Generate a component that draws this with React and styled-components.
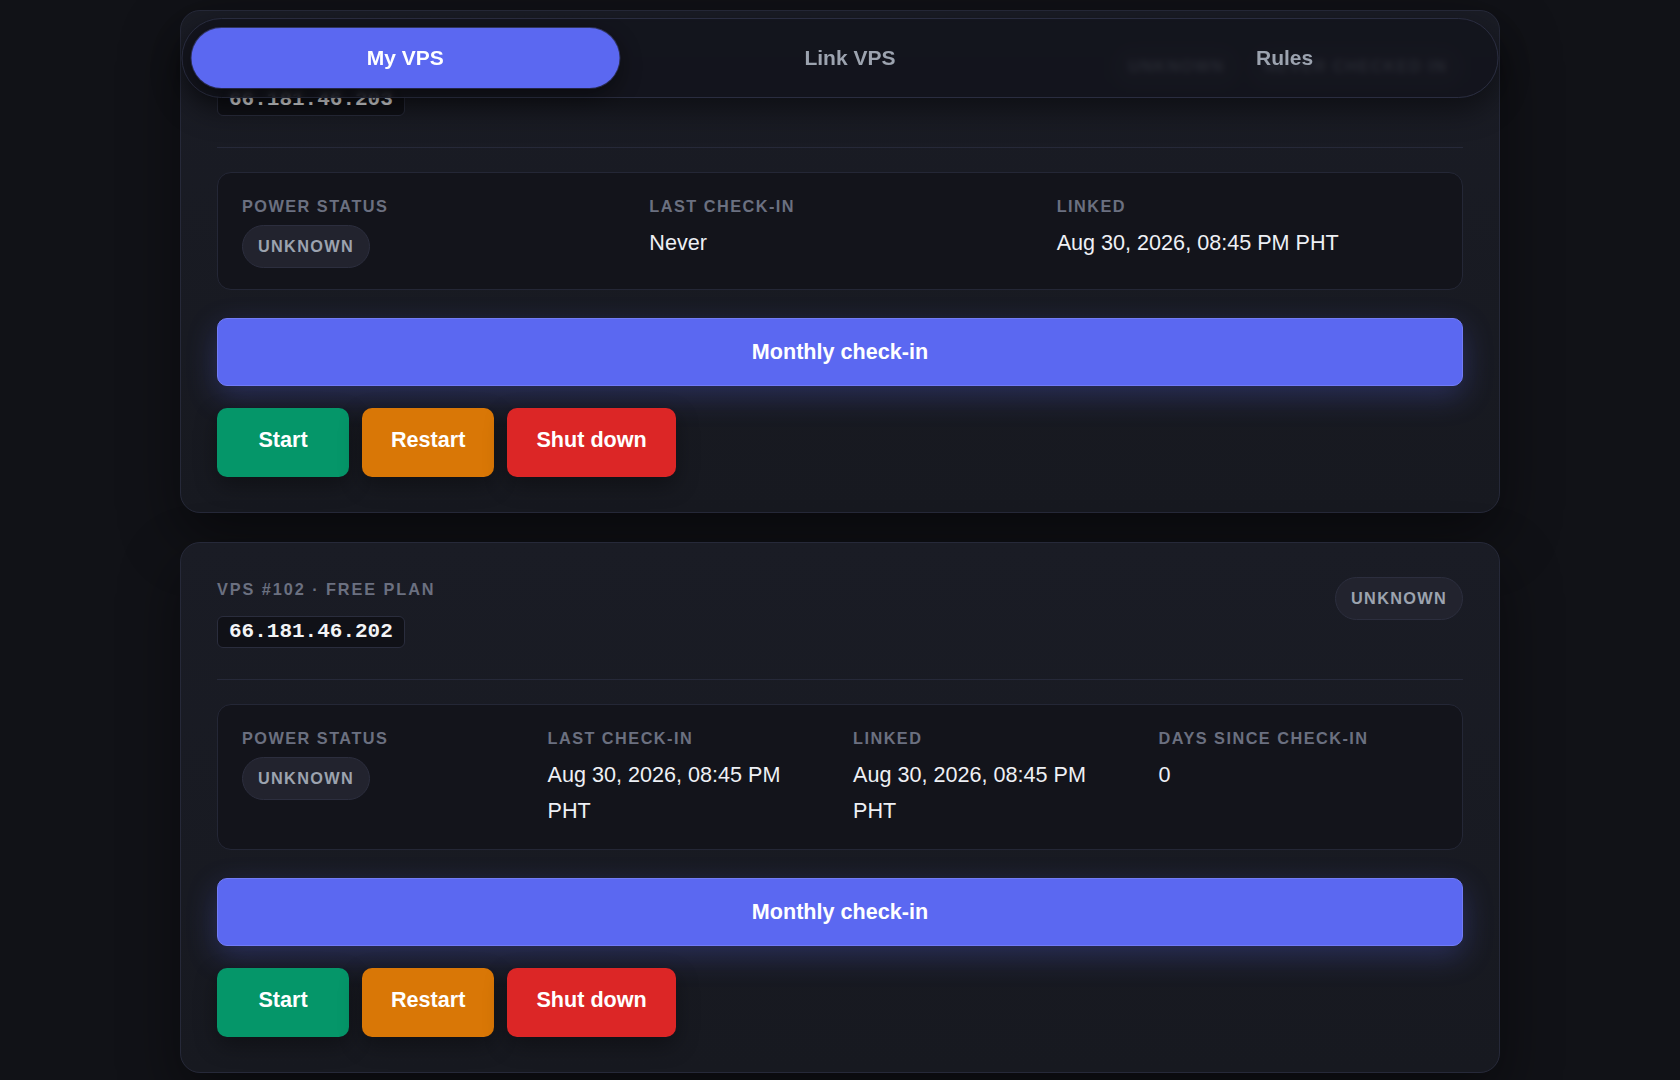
import React from "react";
import styled, { createGlobalStyle } from "styled-components";

const GlobalStyle = createGlobalStyle`
  * {
    box-sizing: border-box;
  }

  html,
  body {
    margin: 0;
    background: #111217;
  }

  body {
    font-family: "Liberation Sans", Arial, sans-serif;
    color: #eef0f5;
  }
`;

const Page = styled.div`
  min-height: 100vh;
  padding: 10px 0 40px;
`;

const Container = styled.main`
  width: 1320px;
  margin: 0 auto;
  display: flex;
  flex-direction: column;
  gap: 29px;
`;

// floating tab switcher, sits over the list while scrolling
const TabBar = styled.nav`
  position: fixed;
  top: 18px;
  left: 50%;
  transform: translateX(-50%);
  z-index: 10;
  width: 1317px;
  display: flex;
  gap: 10px;
  padding: 9px;
  border: 1px solid #2a2d40;
  border-radius: 999px;
  background: rgba(19, 20, 28, 0.86);
  backdrop-filter: blur(3px);
  box-shadow: 0 12px 30px rgba(0, 0, 0, 0.45);
`;

const Tab = styled.button`
  flex: 1 1 auto;
  height: 60px;
  border: 0;
  border-radius: 999px;
  font-family: inherit;
  font-size: 21px;
  font-weight: 700;
  cursor: pointer;
  color: ${(props) => (props.$active ? "#ffffff" : "#9ca3af")};
  background: ${(props) => (props.$active ? "#5b68f1" : "transparent")};
  box-shadow: ${(props) =>
    props.$active
      ? "0 8px 22px rgba(0, 0, 0, 0.45), 0 0 0 1px rgba(120, 130, 255, 0.35)"
      : "none"};
`;

const Card = styled.section`
  border: 1px solid #262939;
  border-radius: 20px;
  background: linear-gradient(180deg, #1a1c25 0%, #171920 100%);
  padding: 36px 36px 35px;
  box-shadow: 0 24px 60px rgba(0, 0, 0, 0.45);
`;

const CardHeader = styled.header`
  display: flex;
  justify-content: space-between;
  align-items: flex-start;
  padding-bottom: 31px;
  border-bottom: 1px solid #262939;
  margin-bottom: 24px;
`;

const HeaderInfo = styled.div`
  display: flex;
  flex-direction: column;
  align-items: flex-start;
  gap: 17px;
`;

const PlanLabel = styled.div`
  font-size: 16.3px;
  line-height: 20px;
  font-weight: 700;
  letter-spacing: 0.118em;
  text-transform: uppercase;
  color: #6b7080;
`;

const Address = styled.code`
  display: inline-block;
  height: 32px;
  padding: 0 11px;
  border: 1px solid #2a2d3d;
  border-radius: 6px;
  background: #101117;
  font-family: "Liberation Mono", "DejaVu Sans Mono", monospace;
  font-size: 21px;
  font-weight: 700;
  line-height: 30px;
  color: #f3f4f6;
`;

const Badges = styled.div`
  display: flex;
  gap: 8px;
  margin-top: -2px;
`;

const Badge = styled.span`
  display: inline-block;
  padding: 10px 15px;
  border: 1px solid #2c2e3e;
  border-radius: 999px;
  background: #22232e;
  font-size: 16.3px;
  line-height: 21px;
  font-weight: 700;
  letter-spacing: 0.08em;
  text-transform: uppercase;
  color: #9ca3af;
`;

const InfoGrid = styled.div`
  display: grid;
  grid-template-columns: repeat(${(props) => props.$cols}, 1fr);
  gap: 26px;
  padding: 20px 24px 21px;
  border: 1px solid #242736;
  border-radius: 14px;
  background: #13141b;
`;

const Field = styled.div`
  display: flex;
  flex-direction: column;
  align-items: flex-start;
`;

const FieldLabel = styled.div`
  font-size: 16.3px;
  line-height: 27px;
  font-weight: 700;
  letter-spacing: 0.09em;
  text-transform: uppercase;
  color: #6b7080;
  margin-bottom: 5px;
`;

const FieldValue = styled.div`
  font-size: 21.6px;
  line-height: 35.5px;
  color: #eef0f5;
`;

const CheckInButton = styled.button`
  display: block;
  width: 100%;
  height: 68px;
  margin-top: 28px;
  border: 1px solid #727cf6;
  border-radius: 10px;
  background: #5b68f1;
  font-family: inherit;
  font-size: 21.6px;
  font-weight: 700;
  color: #ffffff;
  cursor: pointer;
  box-shadow: 0 10px 30px rgba(91, 104, 241, 0.28);
`;

const Actions = styled.div`
  display: flex;
  gap: 13px;
  margin-top: 22px;
`;

const ActionButton = styled.button`
  min-width: 132px;
  height: 69px;
  padding: 0 29px 6px;
  border: 0;
  border-radius: 10px;
  background: ${(props) => props.$bg};
  font-family: inherit;
  font-size: 21.6px;
  font-weight: 700;
  color: #ffffff;
  cursor: pointer;
  box-shadow: 0 8px 22px rgba(0, 0, 0, 0.35);
`;

const servers = [
  {
    id: 103,
    ip: "66.181.46.203",
    badges: ["Unknown", "Never checked in"],
    fields: [
      { label: "Power status", status: "Unknown" },
      { label: "Last check-in", value: "Never" },
      { label: "Linked", value: "Aug 30, 2026, 08:45 PM PHT" },
    ],
  },
  {
    id: 102,
    ip: "66.181.46.202",
    badges: ["Unknown"],
    fields: [
      { label: "Power status", status: "Unknown" },
      { label: "Last check-in", value: "Aug 30, 2026, 08:45 PM PHT" },
      { label: "Linked", value: "Aug 30, 2026, 08:45 PM PHT" },
      { label: "Days since check-in", value: "0" },
    ],
  },
];

function ServerCard({ server }) {
  return (
    <Card>
      <CardHeader>
        <HeaderInfo>
          <PlanLabel>VPS #{server.id} · Free plan</PlanLabel>
          <Address>{server.ip}</Address>
        </HeaderInfo>
        <Badges>
          {server.badges.map((b) => (
            <Badge key={b}>{b}</Badge>
          ))}
        </Badges>
      </CardHeader>

      <InfoGrid $cols={server.fields.length}>
        {server.fields.map((f) => (
          <Field key={f.label}>
            <FieldLabel>{f.label}</FieldLabel>
            {f.status ? <Badge>{f.status}</Badge> : <FieldValue>{f.value}</FieldValue>}
          </Field>
        ))}
      </InfoGrid>

      <CheckInButton>Monthly check-in</CheckInButton>

      <Actions>
        <ActionButton $bg="#059669">Start</ActionButton>
        <ActionButton $bg="#d97706">Restart</ActionButton>
        <ActionButton $bg="#dc2626">Shut down</ActionButton>
      </Actions>
    </Card>
  );
}

export default function App() {
  return (
    <>
      <GlobalStyle />
      <Page>
        <TabBar>
          <Tab $active>My VPS</Tab>
          <Tab>Link VPS</Tab>
          <Tab>Rules</Tab>
        </TabBar>
        <Container>
          {servers.map((s) => (
            <ServerCard key={s.id} server={s} />
          ))}
        </Container>
      </Page>
    </>
  );
}
